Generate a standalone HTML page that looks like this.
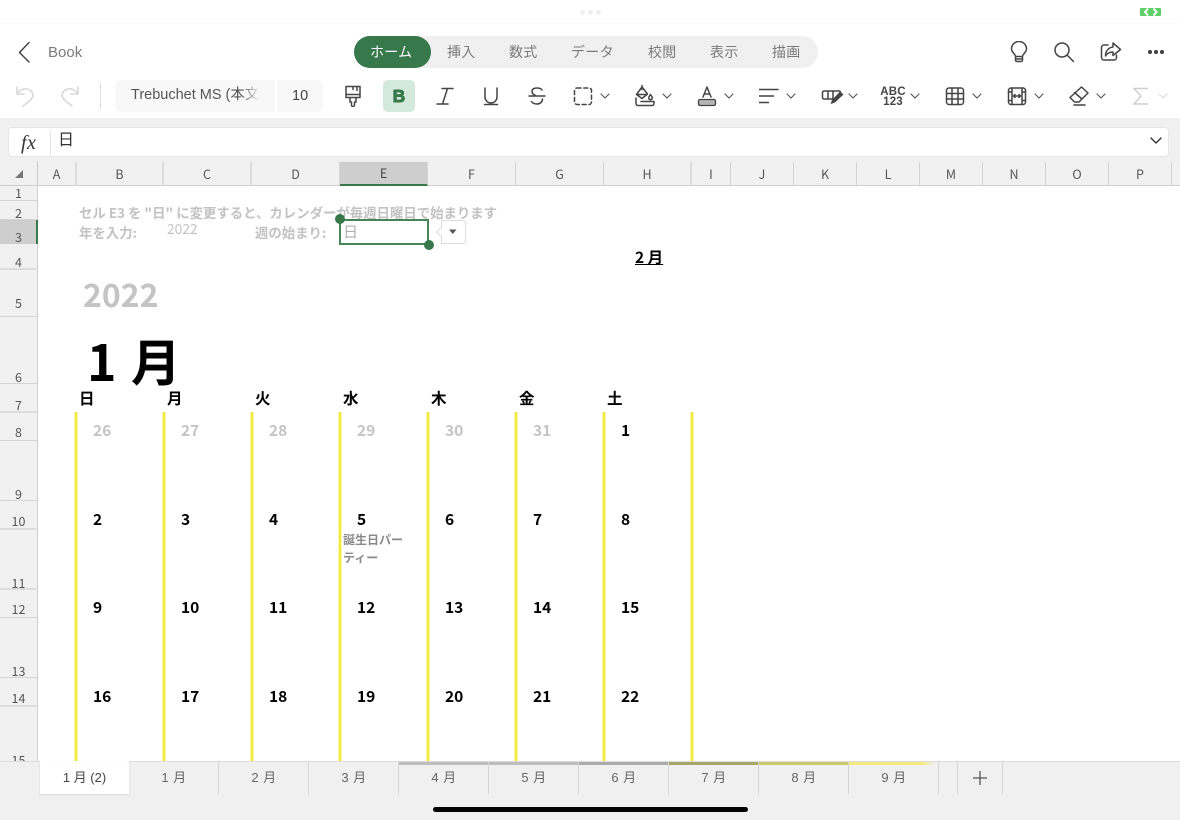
<!DOCTYPE html>
<html><head><meta charset="utf-8"><style>
html,body{margin:0;padding:0;background:#fff}
#p{position:relative;width:1180px;height:820px;overflow:hidden;background:#fff;font-family:"Liberation Sans","Noto Sans CJK JP",sans-serif}
#p div,#p span.a,#p svg{position:absolute}
.t{white-space:nowrap}
.tab{font-size:14px;color:#7a7a7a;line-height:24px;letter-spacing:.3px}
.ic{fill:none;stroke:#444;stroke-width:1.5;stroke-linecap:round;stroke-linejoin:round}
.hc{top:162px;height:24px;line-height:24px;text-align:center;font-size:12.5px;color:#555;font-family:"Noto Sans CJK JP",sans-serif;border-right:1px solid #d4d4d4;box-sizing:border-box}
.hw{border-right:2px solid #dcdcdc}
.rl{left:0;width:37px;text-align:center;font-size:12.5px;color:#555;line-height:14px;font-family:"Noto Sans CJK JP",sans-serif}
.rb{left:0;width:38px;height:1px;background:#d4d4d4}
.rw{height:2px;background:#dcdcdc}
.n{font:700 15.5px/20px "Noto Sans CJK JP",sans-serif;color:#000;white-space:nowrap}
.g{color:#c4c4c4}
.w{font:700 15.5px/20px "Noto Sans CJK JP",sans-serif;color:#000;top:388px}
.y{top:412px;width:4px;height:349px;background:linear-gradient(90deg,#faf6a8 25%,#f3ea3f 25%,#f3ea3f 75%,#faf6a8 75%)}
.lab{font:700 13.4px/16px "Noto Sans CJK JP",sans-serif;color:#c2c2c2;white-space:nowrap}
.st{top:763px;height:32px;line-height:30px;width:90px;text-align:center;font-size:13px;color:#666;box-sizing:border-box;letter-spacing:.5px}
.sl{top:762px;width:1px;height:32px;background:#d6d6d6}
.c{top:762px;height:3px}
</style></head><body><div id="p">

<div style="left:0;top:0;width:1180px;height:23px;background:#fff;border-bottom:1px solid #fbfbfb"></div>
<div style="left:580px;top:10px;width:5px;height:5px;border-radius:50%;background:#f0f0f0"></div>
<div style="left:588px;top:10px;width:5px;height:5px;border-radius:50%;background:#f0f0f0"></div>
<div style="left:596px;top:10px;width:5px;height:5px;border-radius:50%;background:#f0f0f0"></div>
<svg style="left:1140px;top:8px" width="21" height="8" viewBox="0 0 21 8"><rect x="0" y="0" width="21" height="8" rx="1" fill="#5fce68"/><path d="M8 .5 5 4l3 3.500M13.500.5l3 3.500-3 3.500" fill="none" stroke="#fff" stroke-width="2"/></svg>

<svg style="left:16px;top:40px" width="18" height="24" viewBox="0 0 18 24"><path d="M13 2.500 3.500 12.500 13 22" fill="none" stroke="#444" stroke-width="1.500" stroke-linecap="round" stroke-linejoin="round"/></svg>
<div class="t" style="left:48px;top:43px;font-size:15px;line-height:19px;color:#7b7b7b">Book</div>

<div style="left:354px;top:36px;width:464px;height:32px;border-radius:16px;background:#f0f0f0"></div>
<div style="left:354px;top:36px;width:77px;height:32px;border-radius:16px;background:#37794a"></div>
<div class="t tab" style="left:370px;top:40px;color:#fff">ホーム</div>
<div class="t tab" style="left:447px;top:40px">挿入</div>
<div class="t tab" style="left:509px;top:40px">数式</div>
<div class="t tab" style="left:571px;top:40px">データ</div>
<div class="t tab" style="left:648px;top:40px">校閲</div>
<div class="t tab" style="left:710px;top:40px">表示</div>
<div class="t tab" style="left:772px;top:40px">描画</div>

<svg style="left:1008px;top:41px" width="22" height="22" viewBox="0 0 22 22"><path class="ic" d="M7.500 15.500c0-2.500-4-4-4-7.500a7.500 7.500 0 0 1 15 0c0 3.500-4 5-4 7.500zM7.500 16v3a1.500 1.500 0 0 0 1.500 1.500h4a1.500 1.500 0 0 0 1.500-1.500v-3M8 18h6"/></svg>
<svg style="left:1053px;top:41px" width="22" height="22" viewBox="0 0 22 22"><circle class="ic" cx="9" cy="9" r="7"/><path class="ic" d="m14 14 6.500 6.500"/></svg>
<svg style="left:1100px;top:42px" width="22" height="20" viewBox="0 0 22 20"><path class="ic" d="M8 3H4a2.500 2.500 0 0 0-2.500 2.500v10A2.500 2.500 0 0 0 4 18h10a2.500 2.500 0 0 0 2.500-2.500V13"/><path d="M13 1l7.500 6.500L13 13.500V10c-4 0-6 1.500-7.500 4 0-5 3-8.500 7.500-9z" fill="none" stroke="#444" stroke-width="1.500" stroke-linejoin="round"/></svg>
<div style="left:1148px;top:50px;width:3.500px;height:3.500px;border-radius:50%;background:#444"></div>
<div style="left:1154px;top:50px;width:3.500px;height:3.500px;border-radius:50%;background:#444"></div>
<div style="left:1160px;top:50px;width:3.500px;height:3.500px;border-radius:50%;background:#444"></div>

<svg style="left:14px;top:84px" width="22" height="24" viewBox="0 0 22 24"><path d="M3 3v7h7M3 10C8 2 18 4 19 11c0 3-2 5-10 11" fill="none" stroke="#d8d8d8" stroke-width="1.600" stroke-linecap="round" stroke-linejoin="round"/></svg>
<svg style="left:59px;top:84px" width="22" height="24" viewBox="0 0 22 24"><path d="M19 3v7h-7M19 10C14 2 4 4 3 11c0 3 2 5 10 11" fill="none" stroke="#d8d8d8" stroke-width="1.600" stroke-linecap="round" stroke-linejoin="round"/></svg>
<div style="left:100px;top:83px;width:1px;height:26px;background:#dedede"></div>

<div style="left:115px;top:80px;width:160px;height:32px;background:#f8f8f8;border-radius:6px 0 0 6px"></div>
<div style="left:277px;top:80px;width:46px;height:32px;background:#f8f8f8;border-radius:0 6px 6px 0"></div>
<div class="t" style="left:131px;top:86px;width:129px;overflow:hidden;font-size:14.500px;line-height:19px;color:#555">Trebuchet MS (本文</div>
<div style="left:242px;top:84px;width:18px;height:24px;background:linear-gradient(90deg,rgba(248,248,248,0),#f8f8f8)"></div>
<div class="t" style="left:292px;top:87px;font-size:14.500px;line-height:19px;color:#444">10</div>

<svg style="left:343px;top:85px" width="20" height="22" viewBox="0 0 20 22"><path class="ic" d="M3 1.500h14v11H3zM3 9.500h14M7 12.500h6v4.500h-1.500v3a1.500 1.500 0 0 1-3 0v-3H7zM10 1.500v3M14 1.500v4"/></svg>
<div style="left:383px;top:80px;width:32px;height:32px;border-radius:5px;background:#d3e9db"></div>
<div class="t" style="left:383px;top:80px;width:32px;text-align:center;font-size:17.500px;line-height:32px;font-weight:700;color:#37794a;-webkit-text-stroke:.9px #37794a">B</div>
<svg style="left:435px;top:86px" width="20" height="20" viewBox="0 0 20 20"><path class="ic" d="M7 2.500h11M2 18h11M12.500 2.500 7.500 18"/></svg>
<svg style="left:481px;top:86px" width="20" height="20" viewBox="0 0 20 20"><path class="ic" d="M4 2v9a6 6 0 0 0 12 0V2M3.500 18.500h13"/></svg>
<svg style="left:527px;top:86px" width="20" height="20" viewBox="0 0 20 20"><path class="ic" d="M15 4c-1-1.500-2.500-2-5-2-3 0-5 1.200-5 3.500 0 2 1 3 3.500 4M2 10h16M15.500 13c0 3-2.500 5-5.500 5-2.500 0-4.500-1-5.500-2.500"/></svg>
<svg style="left:573px;top:86px" width="20" height="20" viewBox="0 0 20 20"><rect class="ic" x="1.500" y="2" width="17" height="16.500" rx="2.500" stroke-dasharray="4 2.800"/></svg>
<svg style="left:634px;top:84px" width="22" height="24" viewBox="0 0 22 24"><path class="ic" d="M8 3 2.500 10.500 8 14.500 13.500 10 8 3zM3 10.500h10M8 1.500v4M2 14v5.500a2 2 0 0 0 2 2h14a2 2 0 0 0 2-2v-2H7"/><path class="ic" d="M16.500 10.500c-1 1.500-1.800 2.300-1.800 3.400a1.800 1.800 0 0 0 3.600 0c0-1.100-.8-1.900-1.800-3.400z"/></svg>
<svg style="left:696px;top:85px" width="22" height="22" viewBox="0 0 22 22"><path class="ic" d="m7 12 4-10 4 10M8.200 9h5.600"/><rect x="2.500" y="14.500" width="17" height="6" rx="1.500" fill="#b5b5b5" stroke="#444" stroke-width="1.300"/></svg>
<svg style="left:759px;top:88px" width="20" height="16" viewBox="0 0 20 16"><path class="ic" d="M.5 1.500h18.500M.5 8h14M.5 14.500h9"/></svg>
<svg style="left:821px;top:88px" width="24" height="18" viewBox="0 0 24 18"><path class="ic" d="M14 11H3a1.500 1.500 0 0 1-1.500-1.500v-5A1.500 1.500 0 0 1 3 3h15a1.500 1.500 0 0 1 1.500 1.500M7 3v8M12 3v8"/><path d="m9.500 16 1.500-4 8-8.500 3.500 3-8.500 8-4.500 1.500z" fill="#444"/></svg>
<div class="t" style="left:880px;top:87px;width:26px;text-align:center;font:700 11.500px/10px 'Liberation Sans',sans-serif;color:#444;letter-spacing:.2px">ABC<br>123</div>
<svg style="left:945px;top:86px" width="20" height="20" viewBox="0 0 20 20"><rect class="ic" x="1.500" y="2" width="17" height="16.500" rx="2.500"/><path class="ic" d="M7 2v16.500M13 2v16.500M1.500 7.500h17M1.500 13h17"/></svg>
<svg style="left:1007px;top:86px" width="20" height="20" viewBox="0 0 20 20"><rect class="ic" x="1.500" y="2" width="17" height="16.500" rx="2.500"/><path class="ic" d="M5 2v16.500M15 2v16.500M1.500 6h3.500M15 6h3.500M1.500 14.500h3.500M15 14.500h3.500M6.500 10h7M8 8.500 6.500 10 8 11.500M12 8.500l1.500 1.500-1.500 1.500"/></svg>
<svg style="left:1068px;top:84px" width="22" height="24" viewBox="0 0 22 24"><path class="ic" d="M13.500 3 20 9l-9 9H6.500L2 13.500zM6.500 8.500 14 15M6 21h11"/></svg>
<svg style="left:1132px;top:86px" width="18" height="20" viewBox="0 0 18 20"><path d="M16 2.500H2l7 7.500-7 8h14" fill="none" stroke="#cfcfcf" stroke-width="1.500"/></svg>

<svg style="left:0;top:90px" width="1180" height="16" viewBox="0 0 1180 16"><path d="m601 4 4 4 4-4M663 4l4 4 4-4M725 4l4 4 4-4M787 4l4 4 4-4M849 4l4 4 4-4M911 4l4 4 4-4M973 4l4 4 4-4M1035 4l4 4 4-4M1097 4l4 4 4-4" fill="none" stroke="#555" stroke-width="1.100" stroke-linecap="round" stroke-linejoin="round"/><path d="m1159 4 4 4 4-4" fill="none" stroke="#dcdcdc" stroke-width="1.100" stroke-linecap="round" stroke-linejoin="round"/></svg>

<div style="left:0;top:118px;width:1180px;height:44px;background:#f0f0f0"></div>
<div style="left:8px;top:127px;width:1161px;height:30px;background:#fff;border:1px solid #e6e6e6;border-radius:4px;box-sizing:border-box"></div>
<div style="left:50px;top:130px;width:1px;height:25px;background:#e6e6e6"></div>
<div class="t" style="left:21px;top:131px;font:italic 20px/24px 'Liberation Serif',serif;color:#333;letter-spacing:.5px">fx</div>
<div class="t" style="left:58px;top:131px;font-size:16px;line-height:20px;color:#333">日</div>
<svg style="left:1149px;top:135px" width="14" height="12" viewBox="0 0 14 12"><path d="m2 3 5 5 5-5" fill="none" stroke="#333" stroke-width="1.400" stroke-linecap="round" stroke-linejoin="round"/></svg>

<div style="left:0;top:162px;width:1180px;height:24px;background:#f1f1f1"></div>
<div style="left:0;top:185px;width:1180px;height:1px;background:#cfcfcf"></div>
<svg style="left:14px;top:169px" width="10" height="10" viewBox="0 0 10 10"><path d="M9 1v8H1z" fill="#777"/></svg>
<div style="left:37px;top:161px;width:1px;height:25px;background:#cfcfcf"></div>
<div class="hc hw" style="left:38px;width:39px">A</div>
<div class="hc hw" style="left:77px;width:87px">B</div>
<div class="hc hw" style="left:164px;width:88px">C</div>
<div class="hc" style="left:252px;width:88px">D</div>
<div class="hc" style="left:340px;width:88px;background:#cecece;border-bottom:2px solid #37794a;color:#444;line-height:22px">E</div>
<div class="hc" style="left:428px;width:88px">F</div>
<div class="hc" style="left:516px;width:88px">G</div>
<div class="hc hw" style="left:604px;width:88px">H</div>
<div class="hc" style="left:692px;width:39px">I</div>
<div class="hc" style="left:731px;width:63px">J</div>
<div class="hc" style="left:794px;width:63px">K</div>
<div class="hc" style="left:857px;width:63px">L</div>
<div class="hc" style="left:920px;width:63px">M</div>
<div class="hc" style="left:983px;width:63px">N</div>
<div class="hc" style="left:1046px;width:63px">O</div>
<div class="hc" style="left:1109px;width:63px">P</div>

<div style="left:0;top:186px;width:38px;height:576px;background:#f1f1f1;border-right:1px solid #cfcfcf;box-sizing:border-box"></div>
<div style="left:0;top:219px;width:36px;height:25px;background:#cecece"></div>
<div style="left:36px;top:219px;width:2px;height:25px;background:#37794a"></div>
<div class="rb" style="top:200px"></div><div class="rb" style="top:219px"></div>
<div class="rb rw" style="top:268px"></div><div class="rb" style="top:316px"></div><div class="rb" style="top:383px"></div><div class="rb rw" style="top:411px"></div><div class="rb" style="top:440px"></div><div class="rb" style="top:500px"></div><div class="rb rw" style="top:528px"></div><div class="rb rw" style="top:588px"></div><div class="rb" style="top:617px"></div><div class="rb" style="top:677px"></div><div class="rb rw" style="top:705px"></div>
<div class="rl" style="top:186px">1</div><div class="rl" style="top:206px">2</div><div class="rl" style="top:230px">3</div><div class="rl" style="top:255px">4</div><div class="rl" style="top:296px">5</div><div class="rl" style="top:370px">6</div><div class="rl" style="top:398px">7</div><div class="rl" style="top:425px">8</div><div class="rl" style="top:487px">9</div><div class="rl" style="top:514px">10</div><div class="rl" style="top:576px">11</div><div class="rl" style="top:602px">12</div><div class="rl" style="top:664px">13</div><div class="rl" style="top:691px">14</div><div class="rl" style="top:753px">15</div>

<div class="lab" style="left:79px;top:204px">セル E3 を "日" に変更すると、カレンダーが毎週日曜日で始まります</div>
<div class="lab" style="left:79px;top:224px">年を入力:</div>
<div class="lab" style="left:167px;top:220px;font-weight:400;font-size:13.800px">2022</div>
<div class="lab" style="left:255px;top:224px">週の始まり:</div>

<div style="left:339px;top:219px;width:90px;height:26px;border:2px solid #478559;box-sizing:border-box"></div>
<div class="t" style="left:343px;top:224px;font-size:15px;line-height:18px;color:#b0b0b0">日</div>
<div style="left:335px;top:214px;width:10px;height:10px;border-radius:50%;background:#37794a"></div>
<div style="left:423.500px;top:240px;width:10px;height:10px;border-radius:50%;background:#37794a"></div>
<svg style="left:435px;top:220px" width="31" height="25" viewBox="0 0 31 25"><path d="M6.500.5h22a2 2 0 0 1 2 2v19a2 2 0 0 1-2 2h-22v-7L1.500 12l5-4.500z" fill="#fff" stroke="#dcdcdc"/><path d="m14 9.500 7.500 0-3.700 4.500z" fill="#555"/></svg>

<div class="t" style="left:635px;top:248px;font:700 15.500px/18px 'Noto Sans CJK JP',sans-serif;color:#000;text-decoration:underline">2 月</div>
<div class="t" style="left:83px;top:272px;font:700 32px/44px 'Noto Sans CJK JP',sans-serif;color:#c4c4c4">2022</div>
<div class="t" style="left:87px;top:325px;font:700 50px/70px 'Noto Sans CJK JP',sans-serif;color:#000;word-spacing:3px">1 月</div>

<div class="w" style="left:79px">日</div><div class="w" style="left:167px">月</div><div class="w" style="left:255px">火</div><div class="w" style="left:343px">水</div><div class="w" style="left:431px">木</div><div class="w" style="left:519px">金</div><div class="w" style="left:607px">土</div>

<div class="y" style="left:74px"></div><div class="y" style="left:162px"></div><div class="y" style="left:250px"></div><div class="y" style="left:338px"></div><div class="y" style="left:426px"></div><div class="y" style="left:514px"></div><div class="y" style="left:602px"></div><div class="y" style="left:690px"></div>

<div class="n g" style="left:93px;top:420px">26</div><div class="n g" style="left:181px;top:420px">27</div><div class="n g" style="left:269px;top:420px">28</div><div class="n g" style="left:357px;top:420px">29</div><div class="n g" style="left:445px;top:420px">30</div><div class="n g" style="left:533px;top:420px">31</div><div class="n" style="left:621px;top:420px">1</div>
<div class="n" style="left:93px;top:509px">2</div><div class="n" style="left:181px;top:509px">3</div><div class="n" style="left:269px;top:509px">4</div><div class="n" style="left:357px;top:509px">5</div><div class="n" style="left:445px;top:509px">6</div><div class="n" style="left:533px;top:509px">7</div><div class="n" style="left:621px;top:509px">8</div>
<div class="n" style="left:93px;top:597px">9</div><div class="n" style="left:181px;top:597px">10</div><div class="n" style="left:269px;top:597px">11</div><div class="n" style="left:357px;top:597px">12</div><div class="n" style="left:445px;top:597px">13</div><div class="n" style="left:533px;top:597px">14</div><div class="n" style="left:621px;top:597px">15</div>
<div class="n" style="left:93px;top:686px">16</div><div class="n" style="left:181px;top:686px">17</div><div class="n" style="left:269px;top:686px">18</div><div class="n" style="left:357px;top:686px">19</div><div class="n" style="left:445px;top:686px">20</div><div class="n" style="left:533px;top:686px">21</div><div class="n" style="left:621px;top:686px">22</div>
<div class="t" style="left:343px;top:531px;font:700 12px/18px 'Noto Sans CJK JP',sans-serif;color:#8a8a8a">誕生日パー<br>ティー</div>

<div style="left:0;top:761px;width:1180px;height:59px;background:#f0f0f0;border-top:1px solid #dcdcdc;box-sizing:border-box"></div>
<div class="c" style="left:399px;width:90px;background:#bdbdbd"></div>
<div class="c" style="left:489px;width:90px;background:#bdbdbd"></div>
<div class="c" style="left:579px;width:90px;background:#ababab"></div>
<div class="c" style="left:669px;width:90px;background:#a8a56b"></div>
<div class="c" style="left:759px;width:90px;background:#cbc86f"></div>
<div class="c" style="left:849px;width:86px;background:linear-gradient(90deg,#f3ea7d 85%,#f0f0f0)"></div>
<div style="left:40px;top:761px;width:89px;height:33px;background:#fff;box-shadow:0 1px 2px rgba(0,0,0,.1)"></div>
<div class="t" style="left:40px;top:763px;width:89px;text-align:center;font-size:13px;line-height:30px;color:#444;font-weight:400">1 月 (2)</div>
<div class="st" style="left:129px">1 月</div><div class="st" style="left:219px">2 月</div><div class="st" style="left:309px">3 月</div><div class="st" style="left:399px">4 月</div><div class="st" style="left:489px">5 月</div><div class="st" style="left:579px">6 月</div><div class="st" style="left:669px">7 月</div><div class="st" style="left:759px">8 月</div><div class="st" style="left:849px">9 月</div>
<div class="sl" style="left:218px"></div><div class="sl" style="left:308px"></div><div class="sl" style="left:398px"></div><div class="sl" style="left:488px"></div><div class="sl" style="left:578px"></div><div class="sl" style="left:668px"></div><div class="sl" style="left:758px"></div><div class="sl" style="left:848px"></div><div class="sl" style="left:938px"></div>
<div class="sl" style="left:957px"></div>
<div class="sl" style="left:1002px"></div>
<svg style="left:972px;top:770px" width="16" height="16" viewBox="0 0 16 16"><path d="M1 8h14M8 1v14" stroke="#555" stroke-width="1.300" fill="none"/></svg>
<div style="left:433px;top:807px;width:315px;height:5px;border-radius:3px;background:#000"></div>
</div></body></html>
